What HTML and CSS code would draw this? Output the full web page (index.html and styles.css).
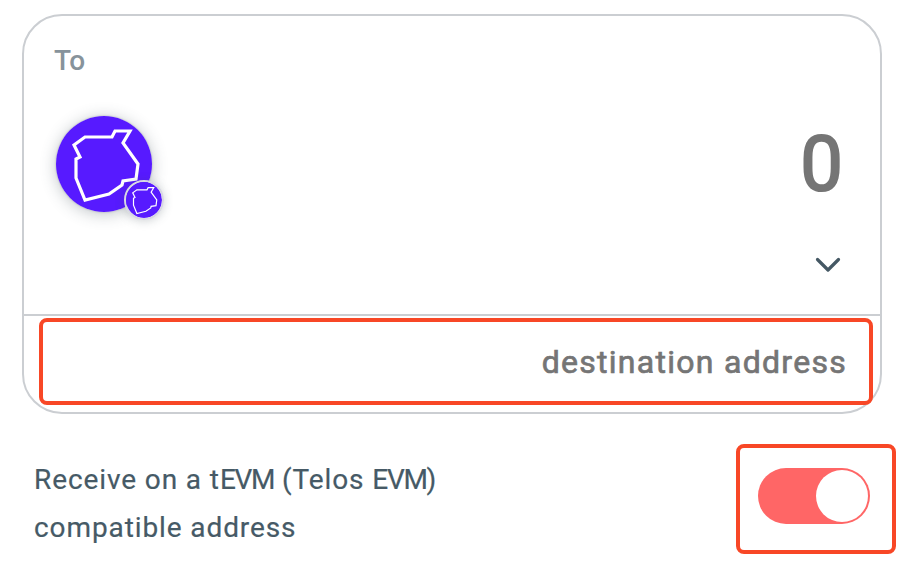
FILE: index.html
```html
<!DOCTYPE html>
<html lang="en">
<head>
<meta charset="utf-8">
<title>Transfer</title>
<link rel="stylesheet" href="styles.css">
</head>
<body>
<main class="page">
  <section class="card">
    <div class="card-main">
      <div class="label">To</div>
      <div class="amount-row">
        <div class="token">
          <svg class="token-icon" viewBox="0 0 96 96"><circle cx="48" cy="48" r="48" fill="#571aff"/><path class="outline" d="M29 21H56L59 15H74L67 27L82 48L80 63L67 65L66 69L53 78L29 84L20 62V43L24 41L18 29Z"/></svg>
          <svg class="network-icon" viewBox="0 0 96 96"><circle cx="48" cy="48" r="48" fill="#571aff"/><path class="outline" d="M29 21H56L59 15H74L67 27L82 48L80 63L67 65L66 69L53 78L29 84L20 62V43L24 41L18 29Z"/></svg>
        </div>
        <div class="amount">0</div>
      </div>
      <svg class="chevron" viewBox="0 0 28 18"><path d="M3.500 3.500L14 14L24.500 3.500"/></svg>
    </div>
    <div class="destination"><span class="placeholder">destination address</span></div>
  </section>
  <section class="option">
    <p class="option-text">Receive on a t<span class="caps">EVM</span> (Telos <span class="caps">EVM</span>)<br>compatible address</p>
    <div class="toggle-frame"><div class="toggle"><div class="thumb"></div></div></div>
  </section>
</main>
</body>
</html>
```

FILE: styles.css
```css
* { box-sizing: border-box; }
body { margin: 0; background: #fff; font-family: Roboto, "Liberation Sans", sans-serif; }
.page { width: 900px; height: 580px; padding-top: 14px; overflow: hidden; }
.card { width: 860px; height: 400px; margin-left: 22px; border: 2px solid #cbced2; border-radius: 40px; }
.card-main { display: flex; flex-direction: column; height: 300px; padding: 28px 38px 0 30px; border-bottom: 2px solid #cbced2; }
.label { height: 34px; line-height: 34px; font-size: 28px; font-weight: 500; color: #87939b; }
.amount-row { display: flex; justify-content: space-between; align-items: center; height: 96px; margin-top: 38px; padding-left: 2px; }
.token { position: relative; width: 96px; height: 96px; border-radius: 50%; box-shadow: 0 2px 16px rgba(60, 75, 85, .32), 0 0 2px rgba(60, 75, 85, .4); }
.token-icon { display: block; width: 96px; height: 96px; }
.network-icon { position: absolute; left: 68px; top: 64px; width: 40px; height: 40px; border: 2px solid #d8d8e2; border-radius: 50%; box-shadow: 0 1px 10px rgba(60, 75, 85, .25); }
.outline { fill: none; stroke: #fff; stroke-width: 3.2; }
.amount { margin-right: -1px; font-size: 76px; line-height: 96px; color: #757575; -webkit-text-stroke: 2px #757575; }
.chevron { align-self: flex-end; width: 28px; height: 18px; margin-top: 44px; fill: none; stroke: #455864; stroke-width: 3.2; stroke-linecap: round; stroke-linejoin: round; }
.destination { display: flex; align-items: center; justify-content: flex-end; width: 834px; height: 87px; margin: 2px 0 0 15px; padding-right: 22px; border: 4px solid #f84726; border-radius: 8px; }
.placeholder { font-size: 32px; color: #757575; letter-spacing: 1.28px; -webkit-text-stroke: .7px #757575; }
.option { display: flex; justify-content: space-between; margin-top: 30px; padding: 0 4px 0 34px; }
.option-text { margin: 12px 0 0; font-size: 28px; line-height: 48px; letter-spacing: .9px; color: #465a66; white-space: nowrap; -webkit-text-stroke: .2px #465a66; }
.caps { letter-spacing: -1.3px; }
.toggle-frame { width: 160px; height: 110px; padding: 20px 0 0 18px; border: 4px solid #f84726; border-radius: 8px; }
.toggle { display: flex; justify-content: flex-end; width: 112px; height: 56px; padding: 2px; border-radius: 28px; background: #ff6666; }
.thumb { width: 52px; height: 52px; border-radius: 50%; background: #fff; }
```
